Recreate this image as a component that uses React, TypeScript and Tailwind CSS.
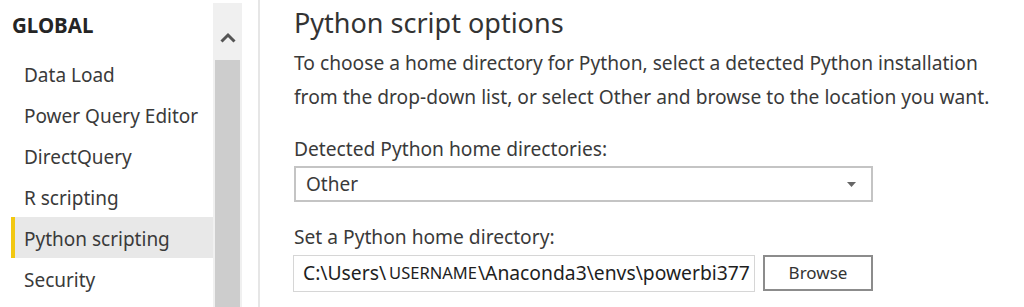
import React from "react";

const font = { fontFamily: '"Noto Sans", "Open Sans", sans-serif' };

const navItems = ["Data Load", "Power Query Editor", "DirectQuery", "R scripting", "Python scripting", "Security"];

function Sidebar() {
  return (
    <div className="flex h-full w-[260px] shrink-0 border-r-2 border-[#e6e6e6]">
      <div className="w-[213px] shrink-0">
        <div className="h-[53px] pl-3 pt-[9px] text-[20.5px] font-bold leading-[32px] text-[#252525]">GLOBAL</div>
        {navItems.map((item) => {
          const active = item === "Python scripting";
          return (
            <div
              key={item}
              className={
                active
                  ? "ml-[11px] flex h-[41px] items-center border-l-4 border-[#f2c811] bg-[#e8e8e8] pl-[9px] pt-[3px] text-[19px] text-[#3a3a3a]"
                  : "ml-[11px] flex h-[41px] items-center pl-[13px] pt-[3px] text-[19px] text-[#3a3a3a]"
              }
            >
              {item}
            </div>
          );
        })}
      </div>
      {/* scrollbar */}
      <div className="mt-[3px] flex w-[29px] shrink-0 flex-col bg-[#f0f0f0]">
        <div className="flex h-[57px] items-start justify-center pt-[29px]">
          <svg width="16" height="11" viewBox="0 0 16 11">
            <path d="M1.5 9.5 L8 3 L14.5 9.5" fill="none" stroke="#555" strokeWidth="3" />
          </svg>
        </div>
        <div className="mx-[2px] flex-1 bg-[#cdcdcd]" />
      </div>
    </div>
  );
}

export default function App() {
  return (
    <div className="flex h-[307px] w-[1024px] overflow-hidden bg-white text-[#3a3a3a]" style={font}>
      <Sidebar />
      <div className="flex-1 pl-[34px]">
        <h1 className="mt-[6px] text-[27px] leading-[34px] text-[#333]">Python script options</h1>
        <p className="mt-[6px] w-[720px] text-[19.2px] leading-[34px]">
          To choose a home directory for Python, select a detected Python installation
          <br />
          from the drop-down list, or select Other and browse to the location you want.
        </p>
        <div className="mt-[23px] text-[19.2px] leading-[24px]">Detected Python home directories:</div>
        <div className="mt-[5px] flex h-[36px] w-[579px] items-center justify-between border-2 border-[#c4c4c4] pl-[10px] pr-[15px] text-[19px]">
          <span>Other</span>
          <svg width="9" height="5" viewBox="0 0 9 5">
            <path d="M0 0 H9 L4.5 5 Z" fill="#666" />
          </svg>
        </div>
        <div className="mt-[23px] text-[19.2px] leading-[24px]">Set a Python home directory:</div>
        <div className="mt-[6px] flex h-[37px] items-stretch gap-[8px]">
          <div className="-ml-[1px] flex w-[462px] items-center whitespace-nowrap border border-[#d6d6d6] pl-[9px] text-[19.3px] text-[#1e1e1e]">
            C:\Users\<span className="ml-[3px] mr-[1px] text-[16.5px]">USERNAME</span>\Anaconda3\envs\powerbi377
          </div>
          <button className="flex h-[36px] w-[110px] items-center justify-center border-2 border-[#8c8c8c] bg-white text-[17px] text-[#333]">
            Browse
          </button>
        </div>
      </div>
    </div>
  );
}
